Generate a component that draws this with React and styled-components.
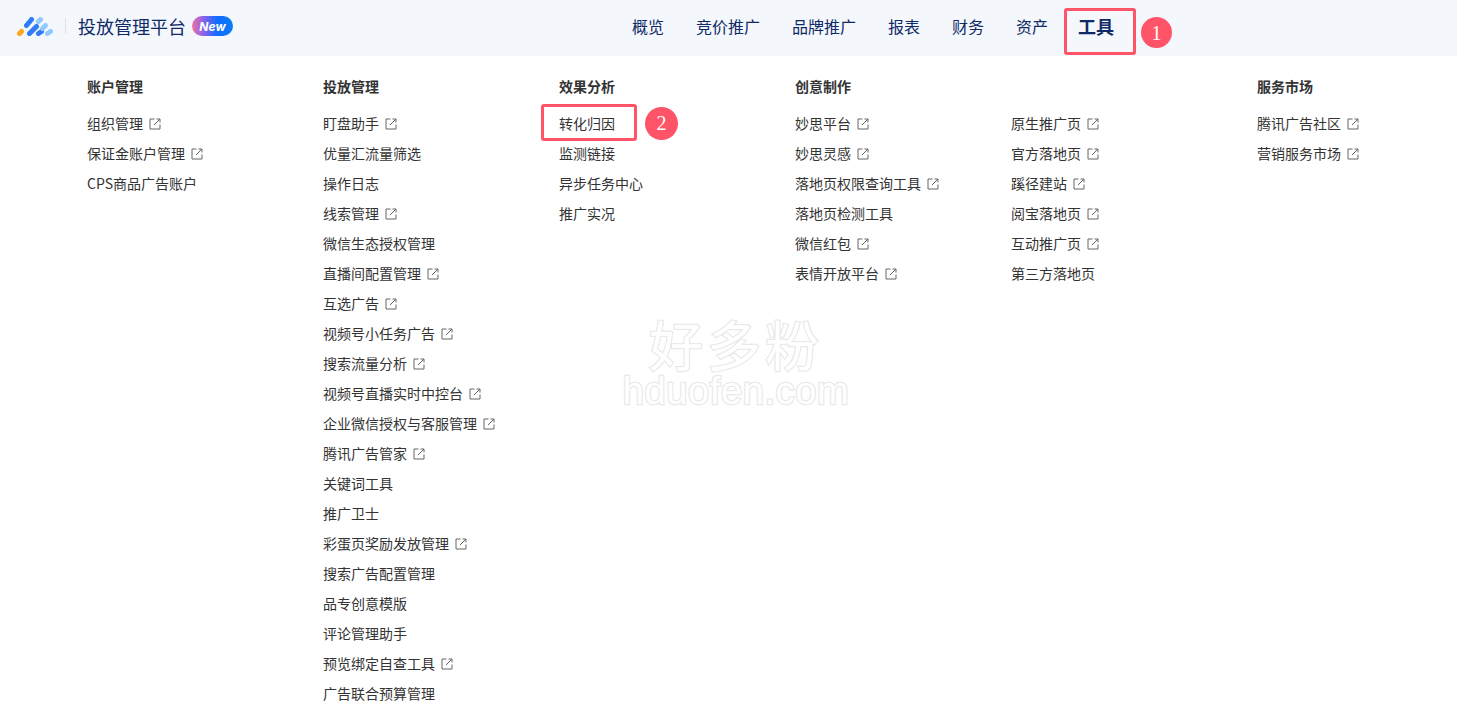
import React from "react";
import styled, { createGlobalStyle } from "styled-components";

const colors = {
  headerBg: "#f4f7fc",
  navy: "#0f2a66",
  text: "#333333",
  icon: "#666666",
  red: "#ff5367",
};

const GlobalStyle = createGlobalStyle`
  html, body {
    margin: 0;
    padding: 0;
    height: 713px;
    overflow: hidden;
    background: #ffffff;
    font-family: "Noto Sans CJK SC", "Noto Sans", sans-serif;
  }
`;

const Page = styled.div`
  position: relative;
  width: 1457px;
  height: 713px;
  overflow: hidden;
`;

const Header = styled.header`
  display: flex;
  align-items: center;
  height: 56px;
  padding: 0 0 4px 17px;
  background: ${colors.headerBg};
  box-sizing: border-box;
`;

const Divider = styled.span`
  width: 1px;
  height: 16px;
  margin: 0 12px;
  background: #dde2ea;
`;

const Title = styled.span`
  font-size: 18px;
  line-height: 24px;
  color: ${colors.navy};
`;

const Badge = styled.span`
  display: flex;
  align-items: center;
  justify-content: center;
  width: 41px;
  height: 20px;
  margin-left: 6px;
  border-radius: 10px;
  background: linear-gradient(90deg, #f0709f 0%, #8a63ec 28%, #0f6cfb 62%, #0a7cf5 100%);
  color: #ffffff;
  font-family: "Inter", "Liberation Sans", sans-serif;
  font-size: 12px;
  font-weight: 700;
  font-style: italic;
`;

const Nav = styled.nav`
  display: flex;
  align-items: center;
  gap: 32px;
  margin-left: 399px;
`;

const NavItem = styled.a`
  position: relative;
  font-size: ${({ $active }) => ($active ? "18px" : "16px")};
  font-weight: ${({ $active }) => ($active ? 700 : 400)};
  line-height: 24px;
  color: ${colors.navy};
  margin-left: ${({ $active }) => ($active ? "-2px" : "0")};
`;

const Highlight = styled.span`
  position: absolute;
  left: ${({ $left }) => $left}px;
  top: ${({ $top }) => $top}px;
  width: ${({ $width }) => $width}px;
  height: ${({ $height }) => $height}px;
  border: 3px solid ${colors.red};
  border-radius: 3px;
  box-sizing: border-box;
`;

const Step = styled.span`
  position: absolute;
  left: ${({ $left }) => $left}px;
  top: ${({ $top }) => $top}px;
  display: flex;
  align-items: center;
  justify-content: center;
  width: ${({ $size }) => $size}px;
  height: ${({ $size }) => $size}px;
  border-radius: 50%;
  background: ${colors.red};
  color: #ffffff;
  font-family: "Liberation Serif", serif;
  font-size: 20px;
  font-weight: 400;
`;

const Panel = styled.main`
  display: grid;
  grid-template-columns: 236px 236px 236px 216px 246px 1fr;
  padding: 20px 0 0 87px;
`;

const Column = styled.section`
  display: flex;
  flex-direction: column;
`;

const ColumnTitle = styled.h3`
  margin: 0 0 12px;
  height: 20px;
  font-size: 14px;
  font-weight: 700;
  line-height: 20px;
  color: ${colors.text};
`;

const Spacer = styled.div`
  height: 20px;
  margin-bottom: 12px;
`;

const Row = styled.a`
  position: relative;
  display: flex;
  align-items: center;
  gap: 6px;
  height: 30px;
  font-size: 14px;
  color: ${colors.text};
  white-space: nowrap;
`;

const IconSvg = styled.svg`
  margin-top: 2px;
`;

const Watermark = styled.div`
  position: absolute;
  left: 600px;
  top: 311px;
  width: 272px;
  display: flex;
  flex-direction: column;
  align-items: center;
  pointer-events: none;
  color: #ffffff;
  paint-order: stroke fill;
  -webkit-text-stroke: 2.5px #e9e9e9;
`;

const WatermarkCn = styled.span`
  font-family: "Noto Sans CJK SC", sans-serif;
  font-size: 54px;
  font-weight: 400;
  line-height: 66px;
  letter-spacing: 4px;
`;

const WatermarkEn = styled.span`
  font-family: "Liberation Sans", sans-serif;
  font-size: 38px;
  font-weight: 400;
  line-height: 28px;
  letter-spacing: 0.6px;
`;

const LinkIcon = () => (
  <IconSvg width="12" height="12" viewBox="0 0 12 12" fill="none" stroke={colors.icon} strokeWidth="1">
    <path d="M5.5 1H1V11H11V6.5" />
    <path d="M5 7L11 1M7.5 1H11V4.5" />
  </IconSvg>
);

const Logo = () => (
  <svg width="36" height="19" viewBox="0 0 36 19" fill="none" strokeLinecap="round" strokeWidth="5">
    <path d="M2.5 16.5L4.5 14.5" stroke="#ffa51f" />
    <path d="M9.5 8.5L14.5 2.5" stroke="#2f7cf6" />
    <path d="M12.5 16.5L19.5 9.5" stroke="#2f7cf6" />
    <path d="M21.5 4.5L23.5 2.5" stroke="#8fcbff" />
    <path d="M21.5 16.5L24.5 14.5" stroke="#2f7cf6" />
    <path d="M25.5 11.5L28.5 8.5" stroke="#8fcbff" />
    <path d="M30.5 16.5L33.5 14.5" stroke="#8fcbff" />
  </svg>
);

const navItems = ["概览", "竞价推广", "品牌推广", "报表", "财务", "资产"];

const columns = [
  {
    title: "账户管理",
    rows: [["组织管理", true], ["保证金账户管理", true], ["CPS商品广告账户", false]],
  },
  {
    title: "投放管理",
    rows: [
      ["盯盘助手", true],
      ["优量汇流量筛选", false],
      ["操作日志", false],
      ["线索管理", true],
      ["微信生态授权管理", false],
      ["直播间配置管理", true],
      ["互选广告", true],
      ["视频号小任务广告", true],
      ["搜索流量分析", true],
      ["视频号直播实时中控台", true],
      ["企业微信授权与客服管理", true],
      ["腾讯广告管家", true],
      ["关键词工具", false],
      ["推广卫士", false],
      ["彩蛋页奖励发放管理", true],
      ["搜索广告配置管理", false],
      ["品专创意模版", false],
      ["评论管理助手", false],
      ["预览绑定自查工具", true],
      ["广告联合预算管理", false],
    ],
  },
  {
    title: "效果分析",
    rows: [["转化归因", false], ["监测链接", false], ["异步任务中心", false], ["推广实况", false]],
  },
  {
    title: "创意制作",
    rows: [
      ["妙思平台", true],
      ["妙思灵感", true],
      ["落地页权限查询工具", true],
      ["落地页检测工具", false],
      ["微信红包", true],
      ["表情开放平台", true],
    ],
  },
  {
    title: "",
    rows: [
      ["原生推广页", true],
      ["官方落地页", true],
      ["蹊径建站", true],
      ["阅宝落地页", true],
      ["互动推广页", true],
      ["第三方落地页", false],
    ],
  },
  {
    title: "服务市场",
    rows: [["腾讯广告社区", true], ["营销服务市场", true]],
  },
];

export default function App() {
  return (
    <Page>
      <GlobalStyle />
      <Header>
        <Logo />
        <Divider />
        <Title>投放管理平台</Title>
        <Badge>New</Badge>
        <Nav>
          {navItems.map((item) => (
            <NavItem key={item}>{item}</NavItem>
          ))}
          <NavItem $active>
            工具
            <Highlight $left={-14} $top={-6} $width={72} $height={47} />
            <Step $left={63} $top={3} $size={31}>1</Step>
          </NavItem>
        </Nav>
      </Header>
      <Panel>
        {columns.map((col) => (
          <Column key={col.title || "more"}>
            {col.title ? <ColumnTitle>{col.title}</ColumnTitle> : <Spacer />}
            {col.rows.map(([label, external]) => (
              <Row key={label}>
                {label}
                {external && <LinkIcon />}
                {label === "转化归因" && (
                  <>
                    <Highlight $left={-18} $top={-4} $width={96} $height={37} />
                    <Step $left={86} $top={-1} $size={33}>2</Step>
                  </>
                )}
              </Row>
            ))}
          </Column>
        ))}
      </Panel>
      <Watermark>
        <WatermarkCn>好多粉</WatermarkCn>
        <WatermarkEn>hduofen.com</WatermarkEn>
      </Watermark>
    </Page>
  );
}
